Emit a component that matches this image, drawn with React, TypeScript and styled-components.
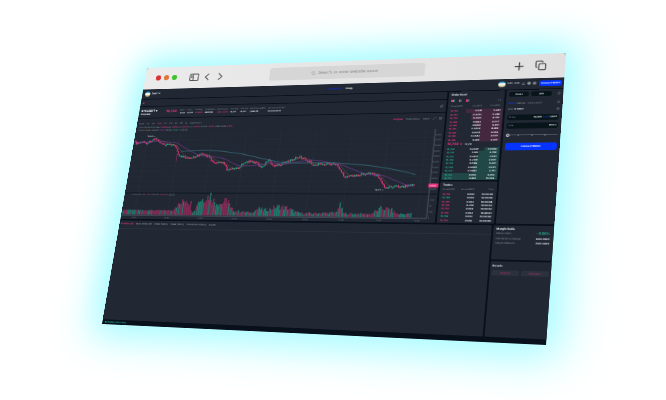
import React from 'react';
import styled, { createGlobalStyle } from 'styled-components';
import {
  Copy, Plus, Search, Settings, Globe, Bell,
  Maximize2, ExternalLink, LayoutGrid, Calculator,
} from 'lucide-react';

/* ---------- perspective of the tilted window ---------- */

const ARTBOARD = { width: 1290, height: 840 };
const ZOOM = 0.4;

type Point = [number, number];

/* Corners of the tilted window, measured from the middle of the scene. */
const CORNERS: Point[] = [[-186, -132], [233, -147], [213, 145], [-231, 124]];

function projectOnto(corners: Point[], w: number, h: number) {
  const [[x0, y0], [x1, y1], [x2, y2], [x3, y3]] = corners;
  const dx1 = x1 - x2, dy1 = y1 - y2, dx2 = x3 - x2, dy2 = y3 - y2;
  const sx = x0 - x1 + x2 - x3, sy = y0 - y1 + y2 - y3;
  const den = dx1 * dy2 - dx2 * dy1;
  const g = (sx * dy2 - dx2 * sy) / den;
  const k = (dx1 * sy - sx * dy1) / den;
  const a = (x1 - x0 + g * x1) / w, d = (y1 - y0 + g * y1) / w;
  const b = (x3 - x0 + k * x3) / h, e = (y3 - y0 + k * y3) / h;
  const m = [a, d, 0, g / w, b, e, 0, k / h, 0, 0, 1, 0, x0, y0, 0, 1];
  return `translate(50%, 50%) matrix3d(${m.join(',')})`;
}

/* ---------- data ---------- */

const PRICE_PATH: Point[] = [
  [0, 246], [8, 254], [26, 247], [44, 252], [69, 234], [86, 248], [107, 262], [122, 254], [149, 268],
  [154, 292], [198, 307], [229, 290], [255, 300], [277, 321], [309, 320], [324, 345], [359, 336],
  [381, 314], [416, 322], [431, 336], [450, 312], [465, 330], [490, 326], [544, 302], [563, 309],
  [593, 328], [630, 324], [664, 329], [688, 365], [720, 362], [757, 356], [786, 360], [812, 401],
  [838, 395], [867, 397], [885, 390], [900, 394],
];
const VOLUME_PATH: Point[] = [
  [0, 16], [110, 16], [166, 16], [174, 34], [190, 44], [206, 62], [224, 46], [229, 14], [240, 16],
  [244, 54], [262, 62], [284, 78], [296, 54], [320, 44], [342, 62], [350, 28], [372, 17], [420, 12],
  [440, 28], [460, 22], [500, 36], [530, 30], [560, 14], [600, 12], [660, 14], [676, 16], [688, 44],
  [700, 12], [780, 12], [808, 32], [834, 30], [856, 13], [900, 14],
];

function at(path: Point[], x: number) {
  const i = Math.max(1, path.findIndex(p => p[0] >= x));
  const [ax, ay] = path[i - 1], [bx, by] = path[i];
  return ay + ((by - ay) * (x - ax)) / (bx - ax);
}
const noise = (i: number) => {
  const s = Math.sin(i * 12.9898) * 43758.5453;
  return s - Math.floor(s);
};

const STEP = 4;
const bars = Array.from({ length: 224 }, (_, i) => {
  const x = i * STEP + 3;
  const close = at(PRICE_PATH, x) + (noise(i) - 0.5) * 8;
  const open = at(PRICE_PATH, Math.max(0, x - STEP)) + (noise(i - 1) - 0.5) * 8;
  return {
    x, open, close, up: close < open,
    high: Math.min(open, close) - noise(i + 50) * 4,
    low: Math.max(open, close) + noise(i + 90) * 4,
    volume: at(VOLUME_PATH, x) * (x < 166 ? 0.85 + noise(i + 7) * 0.2 : 0.6 + noise(i + 7) * 0.5),
    greenVolume: noise(i + 31) > 0.5,
  };
});
const average = (span: number) =>
  bars.map((bar, i) => {
    const part = bars.slice(Math.max(0, i - span), i + 1);
    return `${bar.x},${(part.reduce((t, p) => t + p.close, 0) / part.length).toFixed(1)}`;
  }).join(' ');

const asks = [
  ['18,752', '0.041', '5.281', 68], ['18,751', '0.3732', '5.240', 56], ['18,750', '0.2081', '4.786', 55],
  ['18,749', '0.1063', '4.577', 49], ['18,748', '0.0081', '4.471', 48], ['18,747', '0.3804', '4.463', 40],
  ['18,746', '0.0081', '4.083', 40], ['18,745', '0.3842', '4.007', 40], ['18,744', '0.401', '3.607', 40],
] as const;
const bids = [
  ['18,739', '0.2307', '0.8843', 28], ['18,738', '1.399', '2.739', 36], ['18,737', '0.2451', '2.881', 38],
  ['18,736', '0.2011', '3.007', 42], ['18,735', '0.1143', '3.221', 43], ['18,734', '0.4029', '3.531', 44],
  ['18,733', '0.0847', '3.711', 45], ['18,732', '6.002', '9.853', 100], ['18,731', '0.481', '10.033', 100],
] as const;
const trades = [
  ['18,738', '0.002', '16:08:08', false], ['18,740', '0.003', '16:08:06', true],
  ['18,740', '0.023', '16:08:04', false], ['18,739', '0.274', '16:08:02', false],
  ['18,739', '0.004', '16:08:02', false], ['18,740', '0.023', '16:08:01', false],
  ['18,739', '0.002', '16:08:00', true], ['18,739', '0.086', '16:08:00', false],
] as const;
const stats = [
  ['Mark', '18,741'], ['Index', '18,746'], ['Funding', '0.0100%', 'red'], ['Countdown', '06:51:50'],
  ['24h Change', '-562 -2.91%', 'red'], ['24h High', '19,321'], ['24h Low', '18,531'],
  ['24h Volume(BTC)', '1,868.712'], ['24h Volume(USDT)', '35,289,810.88'],
];

/* ---------- styles ---------- */

const C = {
  panel: '#212833', gap: '#08101c', text: '#eef1f5', dim: '#858d99',
  red: '#e8337a', green: '#22b595', blue: '#0533ff', field: '#07151a',
};

const GlobalStyle = createGlobalStyle`
  * { box-sizing: border-box; }
  body { margin: 0; background: #fff; }
  button, input, select { font: inherit; color: inherit; border: 0; background: none; padding: 0; margin: 0; text-rendering: inherit; }
  a { color: inherit; text-decoration: none; }
`;
const Scene = styled.main`
  height: 100vh;
  display: grid;
  grid-template: 100% / 100%;
  place-items: center;
  overflow: hidden;
  font-family: Inter, "Liberation Sans", sans-serif;
  text-rendering: geometricPrecision;
`;
const Tilt = styled.div`
  width: ${ARTBOARD.width * ZOOM}px;
  height: ${ARTBOARD.height * ZOOM}px;
  transform-origin: 0 0;
  transform: ${projectOnto(CORNERS, ARTBOARD.width * ZOOM, ARTBOARD.height * ZOOM)};
`;
const Window = styled.article`
  zoom: ${ZOOM};
  display: flex;
  flex-direction: column;
  width: 100%;
  height: 100%;
  border-radius: 8px 8px 0 0;
  background: ${C.gap};
  color: ${C.text};
  font-size: 7px;
  line-height: 10px;
  box-shadow: 0 0 120px 32px #9dfbff;
`;
const BrowserBar = styled.header`
  display: grid;
  grid-template-columns: 11fr 476px 10fr;
  align-items: center;
  flex: none;
  height: 74px;
  padding: 0 50px 0 37px;
  border-radius: 8px 8px 0 0;
  background: linear-gradient(90deg, #ebebeb, #e0e0e0);
  color: #505050;
`;
const Tools = styled.div<{ $end?: boolean }>`
  display: flex;
  align-items: center;
  justify-content: ${p => (p.$end ? 'flex-end' : 'flex-start')};
  gap: ${p => (p.$end ? 24 : 11)}px;
`;
const Light = styled.button<{ $color: string }>`
  width: 17px;
  height: 17px;
  border-radius: 50%;
  background: ${p => p.$color};
`;
const ToolButton = styled.button<{ $apart?: boolean }>`
  display: flex;
  margin-left: ${p => (p.$apart ? 32 : 0)}px;
`;
const Address = styled.label`
  display: flex;
  align-items: center;
  justify-content: center;
  gap: 8px;
  height: 42px;
  border-radius: 8px;
  background: #d6d6d6;
  color: #8c8c8c;
  font-size: 13px;
  line-height: 20px;
  input { width: 190px; }
  input::placeholder { color: #7c7c7c; opacity: 1; }
`;
const AppHeader = styled.header`
  display: grid;
  grid-template-columns: 1fr auto 1fr;
  align-items: center;
  flex: none;
  height: 34px;
  padding: 0 4px 0 9px;
  background: ${C.panel};
  font-size: 8px;
`;
const Group = styled.div<{ $gap?: number; $end?: boolean; $top?: number }>`
  display: flex;
  align-items: center;
  justify-content: ${p => (p.$end ? 'flex-end' : 'flex-start')};
  gap: ${p => p.$gap ?? 6}px;
  margin-top: ${p => p.$top ?? 0}px;
`;
const Account = styled.span`
  font-size: 6px;
`;
const Avatar = styled.span`
  width: 18px;
  height: 18px;
  border-radius: 50%;
  background: linear-gradient(#3cabdb 0 30%, #f3f2e4 30% 75%, #c8b98d 75%);
`;
const Nav = styled.nav`
  display: flex;
  gap: 14px;
  font-weight: 700;
  a:first-child { color: #1020ff; }
`;
const Primary = styled.button<{ $wide?: boolean }>`
  height: ${p => (p.$wide ? 21 : 17)}px;
  width: ${p => (p.$wide ? '100%' : 'auto')};
  padding: 0 6px;
  border-radius: 6px;
  background: ${C.blue};
  color: #fff;
  font-size: 7px;
  font-weight: 700;
`;
const Upper = styled.div`
  display: grid;
  grid-template-columns: minmax(0, 1fr) 158px 155px;
  gap: 5px;
  flex: none;
  height: 400px;
  padding-top: 3px;
`;
const Lower = styled.div`
  display: grid;
  grid-template-columns: minmax(0, 1fr) 161px;
  gap: 5px;
  flex: 1;
  min-height: 0;
  padding-top: 5px;
`;
const Column = styled.div<{ $gap?: number }>`
  display: flex;
  flex-direction: column;
  gap: ${p => p.$gap ?? 3}px;
  min-height: 0;
`;
const Panel = styled.section<{ $pad?: string; $grow?: boolean; $height?: number }>`
  flex: ${p => (p.$grow ? '1' : 'none')};
  height: ${p => (p.$height ? `${p.$height}px` : 'auto')};
  min-height: 0;
  padding: ${p => p.$pad ?? '0 7px'};
  border-radius: 4px;
  background: ${C.panel};
  overflow: hidden;
`;
const Notice = styled(Panel)`
  display: flex;
  align-items: center;
`;
const RedDot = styled.i`
  width: 6px;
  height: 6px;
  border-radius: 50%;
  background: ${C.red};
`;
const Ticker = styled(Panel)`
  display: flex;
  align-items: center;
  gap: 7px;
`;
const Pair = styled.h1`
  margin: 0 24px 0 0;
  font-size: 10px;
  line-height: 13px;
  small { display: block; font-size: 7px; }
`;
const Last = styled.strong`
  margin-right: 4px;
  color: ${C.red};
  font-size: 11px;
`;
const Stat = styled.dl<{ $red: boolean }>`
  margin: 0;
  font-size: 6px;
  dt { color: ${C.dim}; }
  dd { margin: 0; font-weight: 700; color: ${p => (p.$red ? C.red : C.text)}; }
`;
const Push = styled.span`
  display: flex;
  margin-left: auto;
`;
const ChartPanel = styled(Panel)`
  display: flex;
  flex-direction: column;
`;
const Strip = styled.div`
  display: flex;
  align-items: center;
  gap: 9px;
  height: 20px;
  padding: 0 7px;
  color: ${C.dim};
  b { color: ${C.red}; }
`;
const Readout = styled.p`
  margin: 0;
  padding-left: 8px;
  font-size: 6px;
  line-height: 11px;
  color: ${C.dim};
  b { color: ${C.red}; }
  i { color: #8b3fb0; font-style: normal; }
  u { color: ${C.green}; text-decoration: none; }
  s { color: #b0833a; text-decoration: none; }
`;
const ChartArt = styled.svg`
  flex: 1;
  min-height: 0;
  width: 100%;
  font-size: 6px;
`;
const Title = styled.h2<{ $flush?: boolean }>`
  margin: 0;
  padding-left: ${p => (p.$flush ? 0 : 5)}px;
  font-size: 8px;
  line-height: 10px;
`;
const Swatches = styled.div`
  display: flex;
  align-items: center;
  gap: 12px;
  height: 28px;
  padding: 0 6px;
  color: ${C.dim};
`;
const Swatch = styled.button<{ $from: string; $to: string }>`
  width: 9px;
  height: 9px;
  background: linear-gradient(90deg, ${p => p.$from} 50%, ${p => p.$to} 50%);
`;
const Table = styled.table<{ $headGap?: number }>`
  width: 100%;
  border-collapse: collapse;
  table-layout: fixed;
  th { padding: ${p => p.$headGap ?? 0}px 6px 3px; font-size: 6px; font-weight: 400; color: ${C.dim}; text-align: right; }
  td { height: 11px; padding: 0 6px; font-weight: 700; line-height: 11px; text-align: right; }
  th:first-child, td:first-child { text-align: left; }
`;
const Depth = styled.tr<{ $share: number; $buy: boolean }>`
  background: linear-gradient(270deg, ${p => (p.$buy ? '#214846' : '#44283f')} ${p => p.$share}%, transparent ${p => p.$share}%);
  td:first-child { color: ${p => (p.$buy ? C.green : C.red)}; }
`;
const Trade = styled.tr<{ $buy: boolean }>`
  td:first-child { color: ${p => (p.$buy ? C.green : C.red)}; }
`;
const MidPrice = styled.p`
  display: flex;
  align-items: center;
  gap: 6px;
  height: 17px;
  margin: 0;
  padding: 0 6px;
  font-size: 7px;
  b { color: ${C.red}; font-size: 10px; }
`;
const Form = styled.form`
  display: flex;
  flex-direction: column;
  gap: 8px;
`;
const Pill = styled.button`
  width: 56px;
  height: 14px;
  border-radius: 7px;
  background: ${C.field};
  font-weight: 600;
`;
const Types = styled.div`
  display: flex;
  gap: 7px;
  padding-top: 8px;
  color: ${C.dim};
  button:first-child { color: #1532ff; font-weight: 700; }
`;
const Row = styled.div`
  display: flex;
  align-items: center;
  justify-content: space-between;
  color: ${C.dim};
  line-height: 13px;
  b { color: ${C.text}; }
`;
const Field = styled.label`
  display: flex;
  align-items: center;
  gap: 4px;
  height: 18px;
  padding: 0 5px;
  border-radius: 6px;
  background: ${C.field};
  color: ${C.dim};
  input { flex: 1; min-width: 0; width: 0; text-align: right; color: ${C.text}; font-weight: 700; }
  select { appearance: none; color: ${C.text}; font-weight: 700; }
  em { color: #1532ff; font-style: normal; font-weight: 700; }
  b { color: ${C.text}; }
`;
const Slider = styled.input.attrs({ type: 'range' })`
  appearance: none;
  width: 100%;
  height: 12px;
  margin: 6px 0 9px;
  background:
    repeating-linear-gradient(90deg, transparent 0 33px, #7a828d 33px 36px) 0 50% / 100% 5px no-repeat,
    linear-gradient(#4d5561, #4d5561) 0 50% / 100% 3px no-repeat;
  &::-webkit-slider-thumb {
    appearance: none;
    width: 11px;
    height: 11px;
    border: 3px solid #e3e6ea;
    border-radius: 50%;
    background: ${C.panel};
  }
`;
const Tabs = styled.nav`
  display: flex;
  align-items: flex-start;
  gap: 8px;
  height: 27px;
  padding: 4px 5px 0;
  border-bottom: 1px solid #29323d;
  color: #a3aab4;
  button:first-child { color: ${C.red}; font-weight: 700; }
`;
const Soft = styled.button`
  flex: 1;
  height: 15px;
  border-radius: 4px;
  background: #2b323e;
  color: #c22d68;
`;
const Green = styled.strong`
  color: ${C.green};
  font-size: 9px;
  i { color: ${C.red}; font-style: normal; }
`;
const Footer = styled.footer`
  flex: none;
  height: 15px;
  padding: 3px 8px;
  color: ${C.green};
  font-weight: 700;
`;

/* ---------- parts ---------- */

const TOP = 218;

function SidebarIcon() {
  return (
    <svg width="32" height="26" viewBox="0 0 32 26" fill="none" stroke="currentColor" strokeWidth="3">
      <rect x="2" y="2" width="28" height="22" rx="3" />
      <path d="M13 2V24M5 8H10M5 13H10" />
    </svg>
  );
}

function Chevron({ d }: { d: string }) {
  return (
    <svg width="30" height="26" viewBox="0 0 30 26" fill="none" stroke="currentColor" strokeWidth="3" strokeLinecap="round">
      <path d={d} />
    </svg>
  );
}

function PriceChart() {
  return (
    <ChartArt viewBox={`0 ${TOP} 966 290`} preserveAspectRatio="none" role="img" aria-label="BTCUSDT price and volume">
      {Array.from({ length: 9 }, (_, i) => (
        <path key={i} d={`M${44 + i * 109} ${TOP}V492`} stroke="#303947" />
      ))}
      {Array.from({ length: 12 }, (_, i) => (
        <path key={i} d={`M0 ${228 + i * 17}H942`} stroke="#2a3340" />
      ))}
      <path d="M0 420H966" stroke="#111925" strokeWidth="3" />
      <path d={`M942 ${TOP}V494M0 494H942`} stroke="#5a6471" strokeWidth="2" fill="none" />
      {bars.map(b => (
        <g key={b.x} fill={b.up ? '#1fa88c' : '#f0357f'}>
          <rect x={b.x + 1} y={b.high} width="1" height={b.low - b.high} />
          <rect x={b.x} y={Math.min(b.open, b.close)} width="3" height={Math.max(4, Math.abs(b.open - b.close))} />
          <rect x={b.x} y={492 - b.volume} width="4" height={b.volume} fill={b.greenVolume ? '#1f7a6c' : '#862a55'} />
        </g>
      ))}
      <rect x="153" y="290" width="2" height="26" fill="#8a2a58" />
      <polyline points={average(7)} fill="none" stroke="#8b6c3a" />
      <polyline points={average(22)} fill="none" stroke="#763b94" strokeWidth="2" />
      <path
        d="M165 281C200 280 230 275 265 279C310 282 340 288 369 292C410 302 450 312 489 319C540 328 620 316 704 326C740 329 775 333 803 338C840 345 870 351 898 360"
        fill="none" stroke="#3b7480" strokeWidth="2"
      />
      <g fill="#717a87">
        <text x="44" y="232" fill={C.text}>19,321 —</text>
        <text x="786" y="410" fill={C.text}>18,531 —</text>
        {Array.from({ length: 11 }, (_, i) => <text key={i} x="944" y={238 + i * 17}>{19400 - i * 100}</text>)}
        {['1.5K', '1K', '500', '0'].map((t, i) => <text key={t} x="946" y={440 + i * 18}>{t}</text>)}
        {['17:00', '20:00', '23:00', '02:00', '05:00', '08:00', '11:00', '13:00', '15:00'].map((t, i) => (
          <text key={t} x={36 + i * 109} y="503">{t}</text>
        ))}
        <text x="24" y="428">▾ VOL(5,10) &nbsp;<tspan fill={C.red}>VOL: 14.2</tspan> &nbsp;VOLUME: <tspan fill={C.red}>18.4703</tspan> ◎ ⊗ ⊗</text>
      </g>
      <rect x="938" y="388" width="28" height="12" fill={C.red} />
      <text x="942" y="397" fill="#fff">18740</text>
    </ChartArt>
  );
}

function OrderBook() {
  const row = (buy: boolean) => ([price, size, sum, share]: readonly [string, string, string, number]) => (
    <Depth key={price} $share={share} $buy={buy}><td>{price}</td><td>{size}</td><td>{sum}</td></Depth>
  );
  return (
    <Panel $height={268} $pad="4px 3px">
      <Title>Order Book</Title>
      <Swatches>
        <Swatch aria-label="Both sides" $from={C.red} $to={C.green} />
        <Swatch aria-label="Bids" $from={C.green} $to="#57606c" />
        <Swatch aria-label="Asks" $from={C.red} $to="#57606c" />
        <Push>1 ▾</Push>
      </Swatches>
      <Table>
        <thead><tr><th>Price(USDT)</th><th>Size(BTC)</th><th>Sum(BTC)</th></tr></thead>
        <tbody>{asks.map(row(false))}</tbody>
      </Table>
      <MidPrice><b>18,740 ↓</b> 18,741</MidPrice>
      <Table><tbody>{bids.map(row(true))}</tbody></Table>
    </Panel>
  );
}

function OrderForm() {
  return (
    <Panel $grow $pad="4px 7px">
      <Form onSubmit={e => e.preventDefault()}>
        <Group $gap={5}>
          <Pill type="button">Cross</Pill>
          <Pill type="button">20X</Pill>
          <Push><ExternalLink size={9} color="#aab0b9" /></Push>
        </Group>
        <Types>
          <button type="button">Limit</button>
          <button type="button">Market</button>
          <button type="button">Stop Limit ▾</button>
          <Push><Calculator size={8} /></Push>
        </Types>
        <Row><span>Avbl: <b>0 USDT</b></span><LayoutGrid size={8} /></Row>
        <Field>Price<input defaultValue="18,740" /><em>Last</em><b>USDT</b></Field>
        <Field>Size<input aria-label="Size" /><select aria-label="Unit"><option>BTC ▾</option></select></Field>
        <Slider aria-label="Share of balance" defaultValue={0} />
        <Primary $wide>Connect Wallet</Primary>
      </Form>
    </Panel>
  );
}

export default function App() {
  return (
    <Scene>
      <GlobalStyle />
      <Tilt>
        <Window>
          <BrowserBar>
            <Tools>
              <Light $color="#dc2f33" aria-label="Close" />
              <Light $color="#e0763a" aria-label="Minimise" />
              <Light $color="#3fc22e" aria-label="Zoom" />
              <ToolButton $apart aria-label="Sidebar"><SidebarIcon /></ToolButton>
              <ToolButton aria-label="Back"><Chevron d="M22 3L11 13L22 23" /></ToolButton>
              <ToolButton aria-label="Forward"><Chevron d="M13 3L24 13L13 23" /></ToolButton>
            </Tools>
            <Address>
              <Search size={14} />
              <input aria-label="Address" placeholder="Search or enter website name" />
            </Address>
            <Tools $end>
              <ToolButton aria-label="New tab"><Plus size={38} strokeWidth={2} color="#333" /></ToolButton>
              <ToolButton aria-label="Tabs"><Copy size={32} strokeWidth={2} color="#333" /></ToolButton>
            </Tools>
          </BrowserBar>
          <AppHeader>
            <Group><Avatar /> <b>| MST ▾</b></Group>
            <Nav><a href="#perpetual">Perpetual</a><a href="#swap">Swap</a></Nav>
            <Group $end>
              <Avatar /><Account>0x58…9280</Account>
              <Bell size={9} /><Globe size={10} /><Settings size={10} />
              <Primary>Connect Wallet</Primary>
            </Group>
          </AppHeader>
          <Upper>
            <Column>
              <Notice $height={22}><RedDot /></Notice>
              <Ticker $height={37}>
                <Pair>BTCUSDT ▾<small>Perpetual</small></Pair>
                <Last>18,740</Last>
                {stats.map(([name, value, tone]) => (
                  <Stat key={name} $red={tone === 'red'}><dt>{name}</dt><dd>{value}</dd></Stat>
                ))}
                <Push><ExternalLink size={9} color="#aab0b9" /></Push>
              </Ticker>
              <ChartPanel $grow $pad="6px 0 0">
                <Strip>
                  <span>Time</span><span>1m</span><span>5m</span><b>15m</b><span>1H</span><span>4H</span><span>1D</span><span>1W</span><span>▥</span><span>Last Price ▾</span>
                  <Push><b>Original</b></Push><span>TradingView</span><span>Depth</span><Maximize2 size={9} /><LayoutGrid size={9} />
                </Strip>
                <Readout>▾ 2022/09/25 16:00 &nbsp;Open: <b>18745</b> High: <b>18750</b> Low: <b>18731</b> Close: <b>18740</b> CHANGE: <b>-0.03%</b> AMPLITUDE: <b>0.10%</b></Readout>
                <Readout>▾ MA(7) <s>18740.2</s> MA(25): <i>18741.6</i> MA(99): <u>18891.3</u> ◎ ⊗ ⊗</Readout>
                <PriceChart />
              </ChartPanel>
            </Column>
            <Column $gap={7}>
              <OrderBook />
              <Panel $grow $pad="4px 3px 0">
                <Title>Trades</Title>
                <Table $headGap={4}>
                  <thead><tr><th>Price(USDT)</th><th>Amount(BTC)</th><th>Time</th></tr></thead>
                  <tbody>
                    {trades.map(([price, size, time, buy], i) => (
                      <Trade key={i} $buy={buy}><td>{price}</td><td>{size}</td><td>{time}</td></Trade>
                    ))}
                  </tbody>
                </Table>
              </Panel>
            </Column>
            <OrderForm />
          </Upper>
          <Lower>
            <Panel $pad="0">
              <Tabs>
                <button>Positions(0)</button><button>Open Orders (0)</button><button>Order History</button>
                <button>Trade History</button><button>Transaction History</button><button>Assets</button>
              </Tabs>
            </Panel>
            <Column $gap={4}>
              <Panel $height={98} $pad="4px 9px">
                <Title $flush>Margin Ratio</Title>
                <Group $top={4} />
                <Row><span>Margin Ratio</span><Green><i>◔</i> 0.00%</Green></Row>
                <Row>Maintenance Margin<b>0.00 USDT</b></Row>
                <Row>Margin Balance<b>0.00 USDT</b></Row>
              </Panel>
              <Panel $grow $pad="8px 6px">
                <Title $flush>Assets</Title>
                <Group $top={8}><Soft>Deposit</Soft><Soft>Withdraw</Soft></Group>
              </Panel>
            </Column>
          </Lower>
          <Footer>● Stable connection</Footer>
        </Window>
      </Tilt>
    </Scene>
  );
}
